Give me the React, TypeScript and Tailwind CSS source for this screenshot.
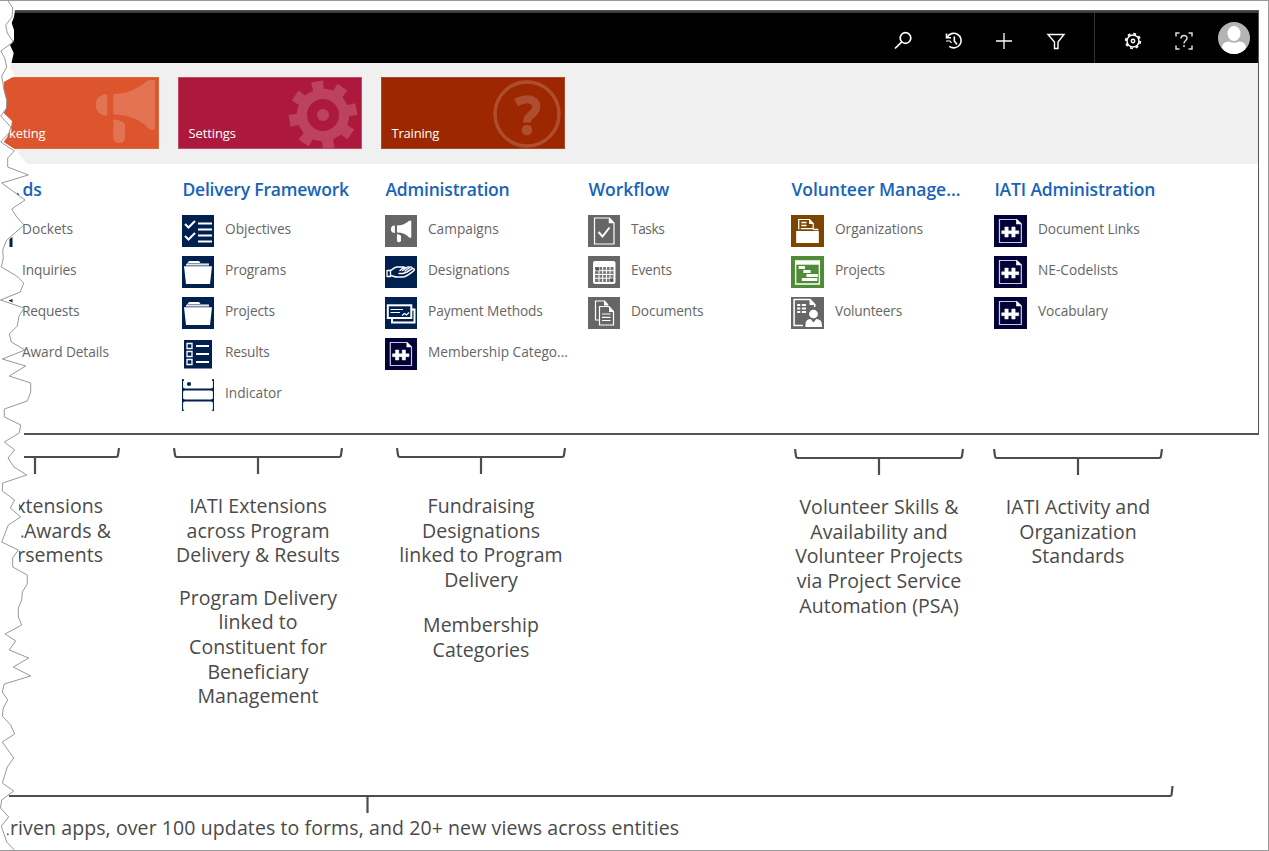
import React from "react";

type Kind =
  | "none" | "checklist" | "folder" | "results" | "indicator" | "campaign" | "hand" | "payment"
  | "entity" | "task" | "calendar" | "documents" | "organization" | "gantt" | "volunteer";

interface Item { label: string; icon: Kind; tracking?: string }
interface Column { title: string; width: string; titleClass: string; items: Item[] }

const NAVY = "#00204f";
const GREY = "#666666";

function Megaphone({ fill, className, opacity = 1 }: { fill: string; className?: string; opacity?: number }) {
  return (
    <svg viewBox="0 0 60 66" className={className} fill={fill} opacity={opacity}>
      <path d="M11 16 V37 H10 A10.5 10.5 0 0 1 10 16 Z" />
      <path d="M17 16 Q35 16 52 2 H58 V51 H53 Q40 36 17 36 Z" />
      <path d="M17 41 Q23 41 28.500 45 V59 A5.800 5.800 0 0 1 17 59 Z" />
    </svg>
  );
}

function TileIcon({ kind }: { kind: Kind }) {
  switch (kind) {
    case "checklist":
      return (
        <svg viewBox="0 0 32 32" className="size-full" stroke="#fff" fill="none">
          <rect width="32" height="32" fill={NAVY} stroke="none" />
          <path d="M3 9 L6.500 12.500 L13 6 M3 21 L6.500 24.500 L13 18" strokeWidth="2" />
          <path d="M16 8.500 H30 M16 14.500 H30 M16 20.500 H30 M16 26.500 H30" strokeWidth="1.900" />
        </svg>
      );
    case "folder":
      return (
        <svg viewBox="0 0 32 32" className="size-full">
          <rect width="32" height="32" fill={NAVY} />
          <path d="M4 8.500 L5.500 7 L7 5 H17 L18.500 7 H27 V9.500 H4 Z" fill="#fff" />
          <path d="M5.500 7.700 H27" stroke={NAVY} strokeWidth="0.600" />
          <path d="M2 10.300 H30 L28 28 H4 Z" fill="#fff" />
        </svg>
      );
    case "results":
      return (
        <svg viewBox="0 0 32 32" className="size-full" stroke="#fff" fill="none">
          <rect x="2" y="2" width="28" height="28.500" fill={NAVY} stroke="none" />
          <path d="M5 5.500h5v5h-5z M5 13.500h5v5h-5z M5 21.500h5v5h-5z" strokeWidth="1.300" />
          <path d="M14 8 H27 M14 16 H27 M14 24 H27" strokeWidth="1.800" />
        </svg>
      );
    case "indicator":
      return (
        <svg viewBox="0 0 32 32" className="size-full" stroke={NAVY} fill="none">
          <path d="M0.500 0 V32 M31.500 0 V32" strokeWidth="1.200" />
          <path d="M1 10.500 H31 M1 21.500 H31" strokeWidth="1.900" />
          <path d="M0 0 L2 1 L0 3 M32 0 L30 1 L32 3 M0 8 L3 10.500 L0 13 M32 8 L29 10.500 L32 13 M0 19 L3 21.500 L0 24 M32 19 L29 21.500 L32 24 M0 29 L2 32 M32 29 L30 32" strokeWidth="0.800" fill={NAVY} />
          <circle cx="7" cy="5" r="2.100" fill={NAVY} stroke="none" />
        </svg>
      );
    case "campaign":
      return (
        <div className="flex size-full items-center justify-center bg-[#666666]">
          <Megaphone fill="#fff" className="h-[23px] w-[21px]" />
        </div>
      );
    case "hand":
      return (
        <svg viewBox="0 0 32 32" className="size-full" stroke="#fff" fill="none" strokeLinejoin="round" strokeLinecap="round">
          <rect width="32" height="32" fill={NAVY} stroke="none" />
          <path d="M2 14.500 H5.500 V20.500 H2 Z" strokeWidth="1.300" />
          <path d="M5.500 14.500 C8 13.500 9 11 12 11 H18.500 L21 12 H18 L15 14.500 M5.500 19.500 C8 19.500 9 21 12 21 H18 C22 20.500 26 17 29 14.500 C30 13 28.500 12 27 12.700 L22 16 L18 17.500 H14" strokeWidth="1.500" />
          <path d="M20 15 L25 11.200 C26.500 10.500 27.500 11.500 27 12.500 M17.500 14.500 L22 11.200 C23.500 10.500 24.500 11 24 12" strokeWidth="1.300" />
        </svg>
      );
    case "payment":
      return (
        <svg viewBox="0 0 32 32" className="size-full" stroke="#fff" fill="none">
          <rect width="32" height="32" fill={NAVY} stroke="none" />
          <path d="M7 22 V25.500 H29.500 V12.500 H26.500" strokeWidth="2" />
          <rect x="2.800" y="8.300" width="23.500" height="12.700" strokeWidth="2" />
          <path d="M5.500 12.500 H18 M5.500 15.500 H15" strokeWidth="1.200" />
          <path d="M17 18.500 L19.500 16.500 L21.500 18 L24 15.500" strokeWidth="1.200" />
        </svg>
      );
    case "entity":
      return (
        <svg viewBox="0 0 32 32" preserveAspectRatio="none" className="size-full" fill="none">
          <rect width="32" height="32" fill="#020238" />
          <path d="M5.300 4.500 H22 L26.500 9 V27.500 H5.300 Z" stroke="#c9c9dc" strokeWidth="1.200" />
          <path d="M21.500 3.800 L27 9.200 H21.500 Z" fill="#fff" />
          <path d="M7.500 15.800 H10.500 V12 H13.800 V15.800 H17.200 V12 H20.500 V15.800 H24 V18.700 H20.500 V22 H17.200 V18.700 H13.800 V22 H10.500 V18.700 H7.500 Z" fill="#fff" stroke="#fff" strokeWidth="0.500" />
        </svg>
      );
    case "task":
      return (
        <svg viewBox="0 0 32 32" className="size-full" stroke="#fff" fill="none">
          <rect width="32" height="32" fill={GREY} stroke="none" />
          <path d="M6.500 3 H21.500 L26 8 V29 H6.500 Z" strokeWidth="1.200" />
          <path d="M21 3 L26 8 H21 Z" fill="#fff" strokeWidth="0.500" />
          <path d="M10.500 17 L14.500 21.500 L21.500 12.500" strokeWidth="2" />
        </svg>
      );
    case "calendar":
      return (
        <svg viewBox="0 0 32 32" className="size-full" stroke="#fff" fill="none">
          <rect width="32" height="32" fill={GREY} stroke="none" />
          <rect x="5" y="5" width="22.500" height="23" rx="2" fill="#fff" stroke="none" />
          <rect x="7" y="11" width="18.500" height="15" fill="#777" stroke="none" />
          <path d="M11 11 V26 M14.700 11 V26 M18.400 11 V26 M22 11 V26 M7 14.700 H25.500 M7 18.500 H25.500 M7 22.200 H25.500" strokeWidth="1" />
          <path d="M8 11.500h3v3h-3z M22 22.500h3v3h-3z" fill="#555" stroke="none" />
        </svg>
      );
    case "documents":
      return (
        <svg viewBox="0 0 32 32" className="size-full" stroke="#fff" fill="none">
          <rect width="32" height="32" fill={GREY} stroke="none" />
          <path d="M11 23 H7.500 V4 H16.500 L20 8" strokeWidth="1.200" />
          <path d="M16 3.500 L20.500 8.500 H16 Z" fill="#fff" stroke="none" />
          <path d="M11.500 9.500 H21 L25.500 14.500 V28 H11.500 Z" fill={GREY} strokeWidth="1.200" />
          <path d="M21 9.500 L26 15 H21 Z" fill="#fff" stroke="none" />
          <path d="M14 17 H22.500 M14 20.300 H22.500 M14 23.500 H22.500" strokeWidth="1.200" />
        </svg>
      );
    case "organization":
      return (
        <svg viewBox="0 0 32 32" preserveAspectRatio="none" className="size-full" stroke="#fff" fill="none">
          <rect width="32" height="32" fill="#7d4600" stroke="none" />
          <path d="M7.500 14.500 V4.500 H18 L21.500 8.500 V13.500" strokeWidth="1.200" />
          <path d="M17.500 4 L22 9 H17.500 Z" fill="#fff" stroke="none" />
          <path d="M10 7.500 H15 M10 10.500 H15" strokeWidth="1.400" />
          <path d="M9.500 13.700 H21 L23 14.500 H26.500" strokeWidth="1.300" />
          <rect x="5" y="16" width="22" height="12" fill="#fff" stroke="none" />
        </svg>
      );
    case "gantt":
      return (
        <svg viewBox="0 0 32 32" preserveAspectRatio="none" className="size-full" fill="none">
          <rect width="32" height="32" fill="#508c36" />
          <path d="M4.500 5 H27.500 V28 H4.500 Z" stroke="#fff" strokeWidth="1.300" />
          <rect x="4.500" y="5" width="23" height="3.700" fill="#fff" />
          <path d="M7.500 10h6v3h-6z M12 14h7v3h-7z M15 18h11v3h-11z M10.500 22h15v3h-15z" fill="#fff" />
        </svg>
      );
    case "volunteer":
      return (
        <svg viewBox="0 0 32 32" preserveAspectRatio="none" className="size-full" fill="none">
          <rect width="32" height="32" fill={GREY} />
          <path d="M11.500 28.500 H3 V2.500 H18.500 L23 7.500 V10" stroke="#fff" strokeWidth="1.500" />
          <path d="M18 2 L24 8 H18 Z" fill="#fff" />
          <path d="M6 7h3v2h-3z M10.500 7h4v2h-4z M6 10.500h3v2h-3z M10.500 10.500h4v2h-4z M6 14h3v2h-3z M10.500 14h4v2h-4z" fill="#fff" />
          <circle cx="21.800" cy="17" r="4.300" fill="#fff" />
          <path d="M14 28 Q14 22 19 22 L21.800 25.500 L24.500 22 Q30 22 30 28 V30 H14 Z" fill="#fff" />
        </svg>
      );
    default:
      return null;
  }
}

const columns: Column[] = [
  {
    title: "ds", width: "w-8", titleClass: "pl-[43px]",
    items: [
      { label: "Dockets", icon: "none" },
      { label: "Inquiries", icon: "none", tracking: "tracking-[-0.15px]" },
      { label: "Requests", icon: "none", tracking: "tracking-[-0.15px]" },
      { label: "Award Details", icon: "none", tracking: "tracking-[-0.08px]" },
    ],
  },
  {
    title: "Delivery Framework", width: "w-8", titleClass: "tracking-[-0.19px]",
    items: [
      { label: "Objectives", icon: "checklist" },
      { label: "Programs", icon: "folder", tracking: "tracking-[-0.1px]" },
      { label: "Projects", icon: "folder", tracking: "tracking-[-0.15px]" },
      { label: "Results", icon: "results", tracking: "tracking-[-0.2px]" },
      { label: "Indicator", icon: "indicator" },
    ],
  },
  {
    title: "Administration", width: "w-8", titleClass: "tracking-[-0.19px]",
    items: [
      { label: "Campaigns", icon: "campaign" },
      { label: "Designations", icon: "hand", tracking: "tracking-[-0.08px]" },
      { label: "Payment Methods", icon: "payment", tracking: "tracking-[-0.1px]" },
      { label: "Membership Catego...", icon: "entity" },
    ],
  },
  {
    title: "Workflow", width: "w-8", titleClass: "",
    items: [
      { label: "Tasks", icon: "task", tracking: "tracking-[-0.4px]" },
      { label: "Events", icon: "calendar", tracking: "tracking-[-0.2px]" },
      { label: "Documents", icon: "documents", tracking: "tracking-[-0.1px]" },
    ],
  },
  {
    title: "Volunteer Manage...", width: "w-[33px]", titleClass: "tracking-[-0.03px]",
    items: [
      { label: "Organizations", icon: "organization", tracking: "tracking-[-0.05px]" },
      { label: "Projects", icon: "gantt", tracking: "tracking-[-0.15px]" },
      { label: "Volunteers", icon: "volunteer", tracking: "tracking-[-0.2px]" },
    ],
  },
  {
    title: "IATI Administration", width: "w-[33px]", titleClass: "tracking-[-0.14px]",
    items: [
      { label: "Document Links", icon: "entity", tracking: "tracking-[-0.1px]" },
      { label: "NE-Codelists", icon: "entity" },
      { label: "Vocabulary", icon: "entity", tracking: "tracking-[-0.1px]" },
    ],
  },
];

function CommandBar() {
  return (
    <header className="flex h-[52px] items-center justify-end border-t-2 border-[#3c3c3c] bg-black pt-1.5 text-white">
      <svg viewBox="0 0 20 20" className="mr-[31px] size-5" fill="none" stroke="#fff" strokeWidth="1.700">
        <circle cx="12.500" cy="7" r="5.300" />
        <path d="M8.800 10.800 L2 17.500" />
      </svg>
      <svg viewBox="0 0 20 20" className="mr-[30px] size-5" fill="none" stroke="#fff" strokeWidth="1.600">
        <path d="M3.200 6.500 A7.300 7.300 0 1 1 5.300 15.300" />
        <path d="M2.500 2.500 V6.800 H7" />
        <path d="M2 10 H6 L7.500 12" strokeWidth="1.200" />
        <path d="M10.300 5.500 V10 L13 13.500" />
      </svg>
      <svg viewBox="0 0 20 20" className="mr-8 size-5" stroke="#fff" strokeWidth="1.300">
        <path d="M10 2 V18 M2 10 H18" />
      </svg>
      <svg viewBox="0 0 20 20" className="mr-7 size-5" fill="none" stroke="#fff" strokeWidth="1.400">
        <path d="M2 3.500 H18 L12 11 V17.500 H8.500 V11 Z" />
      </svg>
      <div className="-mt-1.5 mr-[28px] h-[50px] w-px self-start bg-[#333]" />
      <svg viewBox="0 0 20 20" className="mr-[31px] size-5" fill="none" stroke="#fff">
        <circle cx="10" cy="10" r="6" strokeWidth="1.500" />
        <circle cx="10" cy="10" r="7.300" strokeWidth="1.800" strokeDasharray="2.867 2.867" />
        <circle cx="10" cy="10" r="1.700" strokeWidth="1.500" />
      </svg>
      <svg viewBox="0 0 20 20" className="mr-6 size-5" fill="none" stroke="#ddd" strokeWidth="1.500">
        <path d="M5.500 2 H2 V5.500 M14.500 2 H18 V5.500 M2 14.500 V18 H5.500 M18 14.500 V18 H14.500" />
        <path d="M7 7.500 C7 3.500 13 3.500 13 7.200 C13 9.500 10 9.500 10 12.500 M10 14 V16" />
      </svg>
      <svg viewBox="0 0 32 32" className="mr-2 mb-1.5 size-8">
        <clipPath id="avatar"><circle cx="16" cy="16" r="16" /></clipPath>
        <g clipPath="url(#avatar)">
          <rect width="32" height="32" fill="#b4b4b4" />
          <ellipse cx="16" cy="11.500" rx="6.500" ry="7.500" fill="#fff" />
          <path d="M4 26 Q4 19.500 11 19.500 Q16 22 21 19.500 Q28 19.500 28 26 L24 32 H8 Z" fill="#fff" />
        </g>
      </svg>
    </header>
  );
}

function GearArt() {
  const teeth = [0, 45, 90, 135, 180, 225, 270, 315];
  return (
    <svg viewBox="-35 -35 70 70" className="absolute top-[2px] right-[3px] size-[70px]" fill="#fff" opacity="0.18">
      <path
        fillRule="evenodd"
        d={teeth.map((a, i) => {
          const p = (r: number, deg: number) => {
            const t = ((deg - 10) * Math.PI) / 180;
            return `${(r * Math.sin(t)).toFixed(2)} ${(-r * Math.cos(t)).toFixed(2)}`;
          };
          return `${i ? "L" : "M"}${p(26.5, a - 12)} L${p(34.5, a - 10)} L${p(34.5, a + 10)} L${p(26.5, a + 12)}`;
        }).join(" ") + "Z M16 0 A16 16 0 1 0 -16 0 A16 16 0 1 0 16 0Z"}
      />
      <circle r="6" />
    </svg>
  );
}

function AreaTiles() {
  const tile = "relative flex h-[72px] w-[184px] items-end overflow-hidden pl-[9.500px] pb-[5px] text-[13px] leading-5 text-white";
  return (
    <nav className="flex h-[101px] gap-[19px] bg-[#f0f0f0] pt-[14px]">
      <div className="relative flex h-[72px] w-[159px] items-end overflow-hidden border border-[#d96a46] bg-[#dc552d] pb-[5px] pl-[8px] text-[13px] leading-5 text-white">
        <span className="tracking-[-0.1px]">keting</span>
        <Megaphone fill="#fff" opacity={0.18} className="absolute top-0 right-px h-[67px] w-[61px]" />
      </div>
      <div className={`${tile} border border-[#c04a68] bg-[#ad183d]`}>
        <span className="tracking-[-0.1px]">Settings</span>
        <GearArt />
      </div>
      <div className={`${tile} border border-[#aa4a26] bg-[#9c2700]`}>
        <span className="tracking-[-0.2px]">Training</span>
        <svg viewBox="0 0 68 68" className="absolute top-[2px] right-[3px] size-[68px]" fill="none" stroke="#fff" opacity="0.18">
          <circle cx="34" cy="34" r="32" strokeWidth="3.500" />
          <path d="M23 22.500 Q33 17.500 38.500 20 Q45 23 42.500 30 Q41 33 37 36 Q34 38.500 34 42.500" strokeWidth="8" />
          <circle cx="34" cy="50" r="5.300" fill="#fff" stroke="none" />
        </svg>
      </div>
    </nav>
  );
}

function SiteMap() {
  return (
    <div className="-ml-[20.600px] flex pt-[12px]">
      {columns.map((col) => (
        <section key={col.title} className="w-[203px] shrink-0">
          <h2 className={`h-[27px] text-[17.500px] leading-[27px] font-semibold whitespace-nowrap text-[#1664b9] ${col.titleClass}`}>
            {col.title}
          </h2>
          <ul className="flex flex-col gap-[9px] pt-[12px]">
            {col.items.map((item) => (
              <li key={item.label} className="flex h-8 gap-[10.600px]">
                <div className={`h-8 shrink-0 ${col.width}`}><TileIcon kind={item.icon} /></div>
                <span className={`text-[13.700px] leading-[28px] whitespace-nowrap text-[#666] ${item.tracking ?? ""}`}>{item.label}</span>
              </li>
            ))}
          </ul>
        </section>
      ))}
    </div>
  );
}

interface Note { margin: string; gap: string; groups: string[][] }

const notes: Note[] = [
  { margin: "-ml-[50px]", gap: "gap-[17.500px]", groups: [["xtensions", "Awards &", "rsements"]] },
  { margin: "ml-[53px]", gap: "gap-[17.500px]", groups: [["IATI Extensions", "across Program", "Delivery & Results"], ["Program Delivery", "linked to", "Constituent for", "Beneficiary", "Management"]] },
  { margin: "ml-[53px]", gap: "gap-[20.500px]", groups: [["Fundraising", "Designations", "linked to Program", "Delivery"], ["Membership", "Categories"]] },
  { margin: "ml-[228px] pt-px", gap: "gap-[17.500px]", groups: [["Volunteer Skills &", "Availability and", "Volunteer Projects", "via Project Service", "Automation (PSA)"]] },
  { margin: "ml-[29px] pt-px", gap: "gap-[17.500px]", groups: [["IATI Activity and", "Organization", "Standards"]] },
];

function Notes() {
  return (
    <div className="flex h-[336px] pt-[13px]">
      {notes.map((note, n) => (
        <div key={n} className={`w-[170px] shrink-0 ${note.margin}`}>
          <svg viewBox="0 0 170 26" className="h-[26px] w-[170px]" fill="none" stroke="#4d4d4d" strokeWidth="2.200">
            <path d="M1 0 L2 7 Q2.200 9 4 9 H166 Q167.800 9 168 7 L169 0 M85 9 V26" />
          </svg>
          <div className={`flex flex-col pt-[20px] text-[19.500px] leading-[24.700px] tracking-[0.04px] whitespace-nowrap text-[#4a4a4a] ${note.gap} ${n === 0 ? "items-end pr-[9px]" : "items-center"}`}>
            {note.groups.map((lines, g) => (
              <p key={g} className={n === 0 ? "text-right" : "text-center"}>
                {lines.map((line) => (
                  <span key={line} className={`block ${line === "xtensions" || line === "rsements" ? "pr-2" : ""}`}>{line}</span>
                ))}
              </p>
            ))}
          </div>
        </div>
      ))}
    </div>
  );
}

const tear =
  "7.500,0 12.700,8 12,17 5.700,25 7.300,33 13.300,42 .7,51 4.700,58 6.700,67 1.700,76 4,90 6.700,100 6.500,108 .7,116 10.700,127 9,133 .7,142 14.300,151 7.700,158 7.700,167 28.300,175 1.700,183 25,200 11.700,209 16.700,217 24,225 6.700,240 2.700,250 3.300,258 1.300,267 16.700,276 23.700,283 20.300,292 .5,300 24,308 19,316 17.300,326 9.300,334 11.300,342 25,350 2.300,359 25.700,366 9.300,376 30.700,383 30.700,392 27.300,401 4.300,409 4.300,417 20.700,425 19.300,433 4.300,442 14.700,450 8,458 14,467 26.700,475 2.700,483 2.300,491 14.700,500 10.300,508 20.700,517 8.300,525 1.700,542 18.300,550 12.700,558 12.700,567 27.300,575 27.300,584 22.300,592 21.700,600 18.300,608 18.300,617 21.700,625 5,634 15.700,641 9.300,650 28.700,658 13.300,667 30.700,676 4.300,684 2.300,692 7.700,700 3.300,708 2.300,716 10.700,725 14.700,734 2.300,742 13.700,758 7.300,767 2.300,783 13.700,791 1.700,800 .5,808 8.700,817 1.300,826 6.700,842 14.300,850";

function TornEdge() {
  return (
    <svg viewBox="0 0 60 851" className="pointer-events-none absolute -top-px left-0 h-[851px] w-[60px]" fill="none">
      <path
        fill="#fff"
        d="M0 0 H7.500 L15 10 L14 17 L11.700 23 L14 30 L14 40 L10 45 L13.700 53 L11.500 63 L10 67 L15 76 L13 77 L3.700 82 L4 90 L6.700 100 L6.500 108 L3.700 113 L12 121 L11 128 L7.300 137 L3.700 142 L13 148 L17 151 L27 164 L20 170 V200 L22 212 V425 L24 432 V475 L19 490 V513 L28 524 L26 531 L23 540 L18 545 L20 570 V790 L9 793 L9 799 V820 L10 851 H0 Z"
      />
      <path d="M9.500 239 L12.500 237 V247 H9.500 Z M8.500 300.500 L12.500 299 V302.500 Z" fill={NAVY} />
      <path d="M16.800 192.500 L19 193.800 V195.200 H17.500 Z" fill="#1664b9" />
      <path d="M21.500 535.500h1.800v2h-1.800z M7 833.500h1.600v1.600h-1.600z" fill="#4a4a4a" />
      <polyline points={tear} stroke="#8c8c8c" strokeWidth="0.900" />
    </svg>
  );
}

export default function App() {
  return (
    <div className="relative h-[851px] w-[1269px] overflow-hidden border-t border-r border-b border-[#999] bg-white pt-[9px] font-['Open_Sans','Noto_Sans',sans-serif]">
      <main className="h-[425px] w-[1259px] overflow-hidden border-t border-r border-b-2 border-[#555]">
        <CommandBar />
        <AreaTiles />
        <SiteMap />
      </main>
      <Notes />
      <footer>
        <svg viewBox="0 0 1174 30" className="mt-[13px] h-[30px] w-[1174px]" fill="none" stroke="#4d4d4d" strokeWidth="2.200">
          <path d="M0 12 H1170 Q1171.500 12 1171.700 10 L1172.500 2 M367.500 12 V29" />
        </svg>
        <p className="pl-[10px] text-[19.500px] leading-7 tracking-[0.1px] whitespace-nowrap text-[#4a4a4a]">
          riven apps, over 100 updates to forms, and 20+ new views across entities
        </p>
      </footer>
      <TornEdge />
    </div>
  );
}
